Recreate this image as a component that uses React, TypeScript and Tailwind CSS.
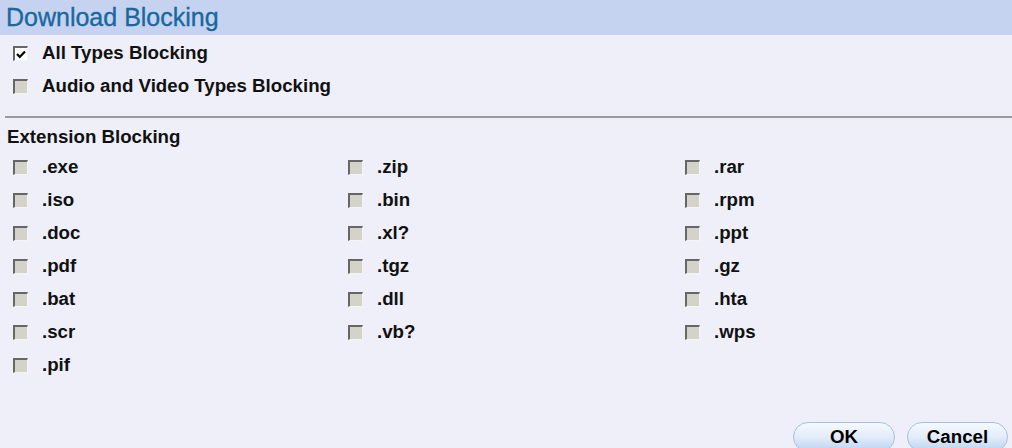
import React, { useState } from "react";

const extensions = [
  ".exe", ".zip", ".rar",
  ".iso", ".bin", ".rpm",
  ".doc", ".xl?", ".ppt",
  ".pdf", ".tgz", ".gz",
  ".bat", ".dll", ".hta",
  ".scr", ".vb?", ".wps",
  ".pif",
];

function Box({ checked }: { checked: boolean }) {
  return (
    <span
      className={`flex items-center justify-center w-[15px] h-[15px] shrink-0 border-t-2 border-l-2 border-b border-r border-t-[#666] border-l-[#666] border-b-[#f4f4f4] border-r-[#f4f4f4] ${
        checked ? "bg-white" : "bg-[#d3d3ca]"
      }`}
    >
      {checked && (
        <svg width="10" height="9" viewBox="0 0 10 9">
          <path d="M1 4 L3.8 7 L9 1.5" fill="none" stroke="#000" strokeWidth="2.2" />
        </svg>
      )}
    </span>
  );
}

function Row({ label, checked }: { label: string; checked: boolean }) {
  return (
    <div className="h-[33px] flex items-center gap-[14px]">
      <Box checked={checked} />
      <span className="font-bold text-[18.7px] leading-none text-[#111]">{label}</span>
    </div>
  );
}

export default function App() {
  const [allTypes] = useState(true);

  return (
    <div className="w-[1012px] h-[448px] overflow-hidden bg-[#eeeff8] font-['Liberation_Sans',Arial,sans-serif]">
      <div className="h-[35px] bg-[#c6d3f0] pl-[6px] flex items-center text-[25px] leading-none text-[#19689f] [-webkit-text-stroke:0.35px_#19689f]">
        Download Blocking
      </div>

      <div className="pl-[13px] pt-[2px]">
        <Row label="All Types Blocking" checked={allTypes} />
        <Row label="Audio and Video Types Blocking" checked={false} />
      </div>

      <div className="mt-[13px] ml-[5px] h-[2px] bg-[#9c9c9c]" />

      <div className="mt-[8px] pl-[7px] h-[22px] flex items-center font-bold text-[18.7px] text-[#111]">
        Extension Blocking
      </div>

      <div className="mt-[3px] pl-[13px] grid grid-cols-[335px_337px_1fr]">
        {extensions.map((ext) => (
          <Row key={ext} label={ext} checked={false} />
        ))}
      </div>

      <div className="mt-[40px] pr-[4px] flex justify-end gap-[12px]">
        <button className="w-[102px] h-[30px] rounded-full border border-[#a8c0e3] bg-gradient-to-b from-[#f6f9fe] via-[#e3ecf9] to-[#bdd3f0] font-bold text-[18.7px] text-black">
          OK
        </button>
        <button className="w-[101px] h-[30px] rounded-full border border-[#a8c0e3] bg-gradient-to-b from-[#f6f9fe] via-[#e3ecf9] to-[#bdd3f0] font-bold text-[18.7px] text-black">
          Cancel
        </button>
      </div>
    </div>
  );
}
